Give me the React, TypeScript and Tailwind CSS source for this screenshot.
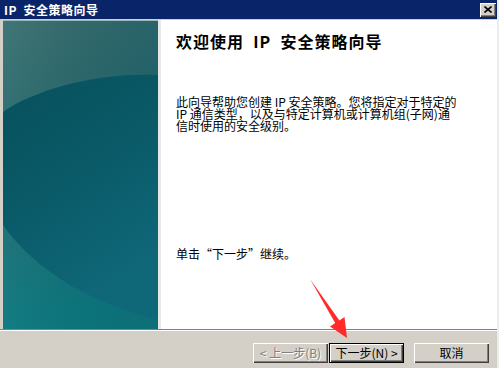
const font = "font-['SimSun','Noto_Sans_CJK_SC',sans-serif]";

function Banner() {
  return (
    <svg width="155" height="309" viewBox="0 0 155 309" className="block">
      <defs>
        <linearGradient id="base" x1="0" y1="0" x2="0.3" y2="1">
          <stop offset="0" stopColor="#417676" />
          <stop offset="0.45" stopColor="#2a6e74" />
          <stop offset="1" stopColor="#0e7f87" />
        </linearGradient>
        <linearGradient id="dark" x1="0" y1="0" x2="0.4" y2="1">
          <stop offset="0" stopColor="#07505b" />
          <stop offset="0.5" stopColor="#0a5a68" />
          <stop offset="1" stopColor="#0f6878" />
        </linearGradient>
        <linearGradient id="shade" x1="0" y1="0" x2="1" y2="0">
          <stop offset="0" stopColor="#000000" stopOpacity="0" />
          <stop offset="1" stopColor="#0a3f4a" stopOpacity="0.25" />
        </linearGradient>
      </defs>
      <rect width="155" height="309" fill="url(#base)" />
      <rect width="155" height="309" fill="url(#shade)" />
      <path
        d="M155 55 C 95 52, 30 70, 0 92 L 0 205 C 35 255, 95 285, 155 300 Z"
        fill="url(#dark)"
      />
      <path d="M0 0 H155 V1 H0 Z" fill="#9bb6b6" />
    </svg>
  );
}

function Btn({
  children,
  disabled,
  primary,
}: {
  children: React.ReactNode;
  disabled?: boolean;
  primary?: boolean;
}) {
  if (primary) {
    return (
      <div className="h-[20px] w-[75px] border border-black bg-[#d4d0c8]">
        <div className="flex h-full w-full items-center justify-center whitespace-pre text-[12px] leading-[12px] text-black shadow-[inset_1px_1px_#ffffff,inset_-1px_-1px_#404040,inset_-2px_-2px_#808080]">
          {children}
        </div>
      </div>
    );
  }
  return (
    <div
      className={
        "flex h-[20px] w-[75px] items-center justify-center whitespace-pre bg-[#d4d0c8] text-[12px] leading-[12px] shadow-[inset_1px_1px_#ffffff,inset_-1px_-1px_#404040,inset_-2px_-2px_#808080] " +
        (disabled
          ? "text-[#808080] [text-shadow:1px_1px_#ffffff]"
          : "text-black")
      }
    >
      {children}
    </div>
  );
}

export default function App() {
  return (
    <div className={`relative h-[368px] w-[499px] overflow-hidden bg-[#ececec] ${font}`}>
      <div className="flex h-full w-[497px] flex-col bg-[#d4d0c8]">
        <div className="flex h-[19px] shrink-0 items-center justify-between bg-[#0a246a] pl-[4px] pr-[1px]">
          <span className="whitespace-pre text-[12px] font-bold leading-[12px] tracking-[0.5px] text-white">
            IP  安全策略向导
          </span>
          <div className="flex h-[14px] w-[16px] items-center justify-center bg-[#d4d0c8] shadow-[inset_1px_1px_#ffffff,inset_-1px_-1px_#404040,inset_-2px_-2px_#808080]">
            <svg width="8" height="7" viewBox="0 0 8 7">
              <path d="M0.5 0.5 L7.5 6.5 M7.5 0.5 L0.5 6.5" stroke="#000" strokeWidth="1.6" />
            </svg>
          </div>
        </div>
        <div className="mt-[1px] flex h-[309px] shrink-0 pl-[3px]">
          <Banner />
          <div className="w-[3px] bg-[#e8e8e6]" />
          <div className="flex flex-1 flex-col bg-white pl-[15px] pt-[13px]">
            <h1 className="whitespace-pre text-[16px] font-bold leading-[16px] tracking-[1px] text-black">
              欢迎使用  IP  安全策略向导
            </h1>
            <p className="mt-[47px] whitespace-pre text-[12px] leading-[12px] text-black">
              {"此向导帮助您创建 IP 安全策略。您将指定对于特定的\nIP 通信类型，以及与特定计算机或计算机组(子网)通\n信时使用的安全级别。"}
            </p>
            <p className="mt-[116px] text-[12px] leading-[12px] text-black">
              单击“下一步”继续。
            </p>
          </div>
        </div>
        <div className="h-px shrink-0 bg-[#808080]" />
        <div className="h-px shrink-0 bg-white" />
        <div className="flex flex-1 items-start justify-end pr-[8px] pt-[12px]">
          <Btn disabled>{"< 上一步(B)"}</Btn>
          <div className="w-[1px]" />
          <Btn primary>{"下一步(N) >"}</Btn>
          <div className="w-[10px]" />
          <Btn>取消</Btn>
        </div>
      </div>
      <svg
        className="pointer-events-none absolute left-0 top-0"
        width="499"
        height="368"
        viewBox="0 0 499 368"
      >
        <polygon
          points="310,279 339.4,320.5 344.5,317 347,338 330,326.5 335.2,323.1"
          fill="#ff2b2b"
        />
      </svg>
    </div>
  );
}
